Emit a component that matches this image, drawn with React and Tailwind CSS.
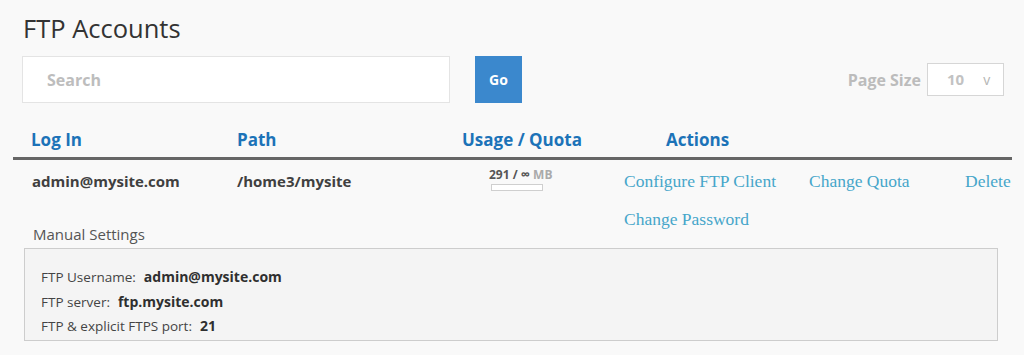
const rowFont = { fontFamily: '"Open Sans", "Liberation Sans", sans-serif' };

const settings = [
  { label: 'FTP Username:', value: 'admin@mysite.com' },
  { label: 'FTP server:', value: 'ftp.mysite.com' },
  { label: 'FTP & explicit FTPS port:', value: '21' },
];

export default function App() {
  return (
    <div className="w-full h-[355px] bg-[#f9f9f9] text-[#3d3d3d] overflow-hidden" style={rowFont}>
      {/* Title */}
      <h1 className="pt-[11px] pl-[23px] text-[25.5px] leading-[34px] text-[#333]">FTP Accounts</h1>

      {/* Toolbar */}
      <div className="mt-[11px] flex items-center pl-[22px] pr-[20px]">
        <div className="w-[428px] h-[47px] bg-white border border-[#e4e4e4] flex items-center pl-[24px]">
          <span className="text-[16px] font-bold text-[#bdbdbd]">Search</span>
        </div>
        <button className="ml-[25px] w-[47px] h-[47px] bg-[#3b88cd] text-white text-[14px] font-bold">Go</button>
        <div className="flex-1" />
        <span className="text-[16px] font-bold text-[#bcbcbc] mr-[6px]">Page Size</span>
        <div className="w-[77px] h-[33px] bg-white border border-[#d6d6d6] flex items-center pl-[19px]">
          <span className="text-[15px] font-bold text-[#c2c2c2]">10</span>
          <span className="ml-[19px] text-[14px] text-[#b5b5b5]">v</span>
        </div>
      </div>

      {/* Table */}
      <div className="ml-[13px] w-[999px]">
        <div className="mt-[25px] flex pl-[18px] pb-[5px] border-b-[3px] border-[#666] text-[17px] leading-[24px] font-bold text-[#1c73b8]">
          <div className="w-[206px]">Log In</div>
          <div className="w-[225px]">Path</div>
          <div className="w-[204px]">Usage / Quota</div>
          <div>Actions</div>
        </div>

        <div className="flex pt-[7px]">
          <div className="w-[611px] flex flex-col">
            <div className="flex pl-[19px] text-[15px] leading-[28px] font-bold text-[#404040]">
              <div className="w-[205px]">admin@mysite.com</div>
              <div className="w-[252px]">/home3/mysite</div>
              <div className="w-[135px] flex flex-col">
                <div className="text-[12px] leading-[14px] font-bold text-[#555]">
                  291 / <span className="text-[13px]">∞</span> <span className="text-[#aaa]">MB</span>
                </div>
                <div className="mt-[2px] ml-[2px] w-[52px] h-[7px] bg-white border border-[#cfcfcf]" />
              </div>
            </div>
            <div className="mt-[29px] pl-[20px] text-[15px] leading-[20px] text-[#555]">Manual Settings</div>
          </div>
          <div
            className="flex flex-col gap-[10px] text-[17.5px] leading-[28px] text-[#46a6ca]"
            style={{ fontFamily: '"Liberation Serif", "DejaVu Serif", serif' }}
          >
            <div className="flex">
              <span className="w-[185px]">Configure FTP Client</span>
              <span className="w-[156px]">Change Quota</span>
              <span>Delete</span>
            </div>
            <span>Change Password</span>
          </div>
        </div>

        <div className="mt-[4px] ml-[11px] w-[974px] bg-[#f4f4f4] border border-[#cdcdcd] pt-[16px] pb-[1px] pl-[16px] leading-[23.5px]">
          {settings.map(s => (
            <div key={s.label} className="flex items-baseline gap-[8px]">
              <span className="text-[13.5px] text-[#444]">{s.label}</span>
              <span className="text-[14px] font-bold text-[#2f2f2f]">{s.value}</span>
            </div>
          ))}
        </div>
      </div>
    </div>
  );
}
